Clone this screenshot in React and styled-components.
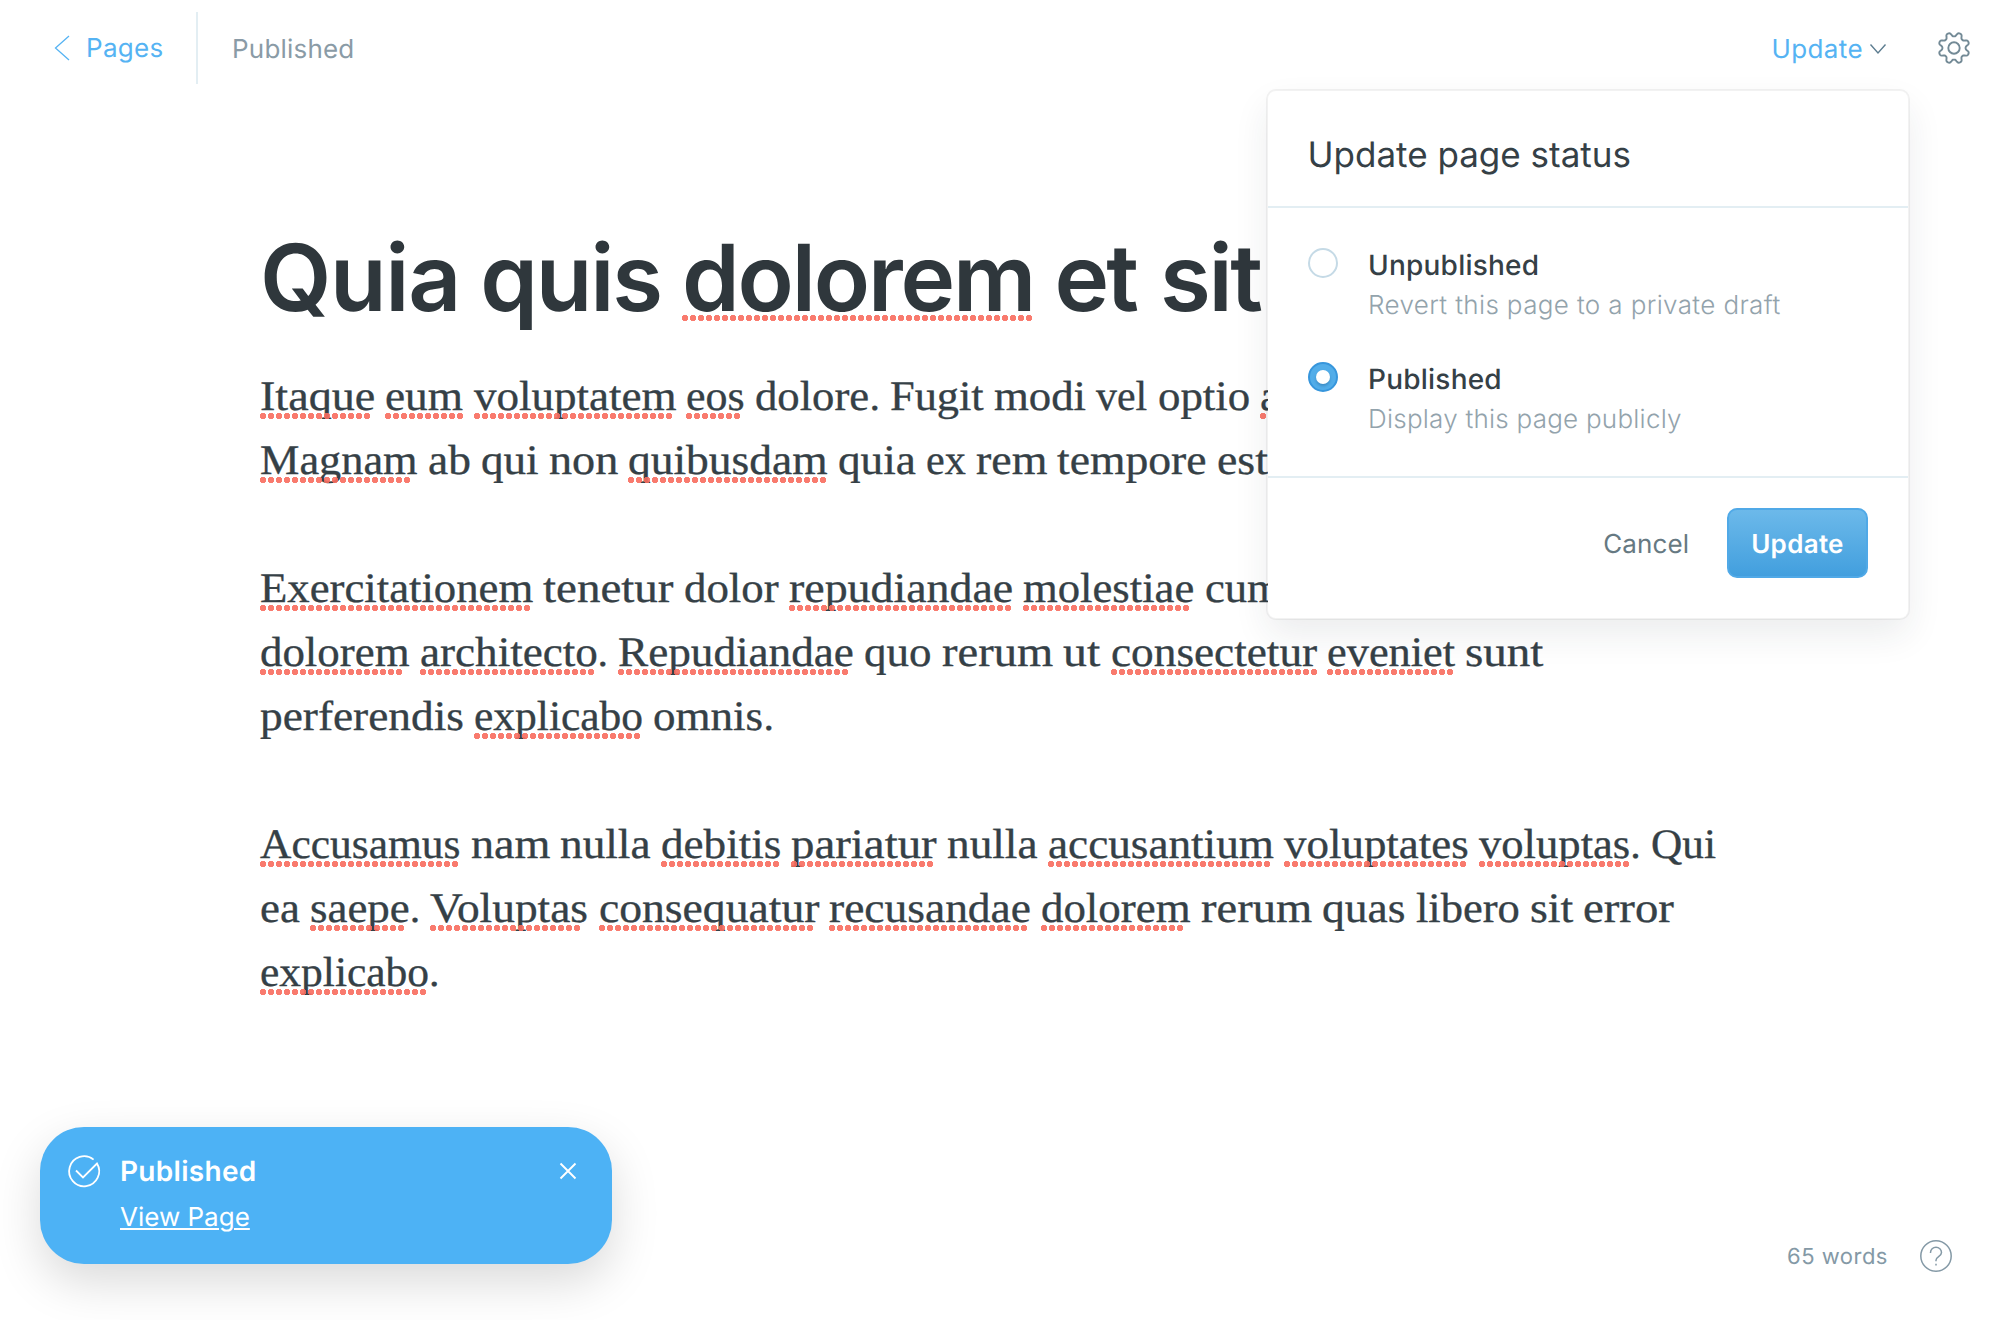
import React from "react";
import styled, { createGlobalStyle, css } from "styled-components";

const SERIF = '"Liberation Serif", Georgia, serif';
const SANS = 'Inter, "Open Sans", sans-serif';

const GlobalStyle = createGlobalStyle`
  * { box-sizing: border-box; }
  body { margin: 0; background: #fff; font-family: ${SANS}; text-rendering: geometricPrecision; }
  button { text-rendering: inherit; }
`;

/* Advance widths (1/1000 em) that the body copy is set to. */
const ADVANCES = {
  a: 504, b: 560, c: 454, d: 575, e: 484, f: 325, g: 510, h: 582, i: 293, j: 291, k: 535,
  l: 287, m: 880, n: 591, o: 539, p: 571, q: 560, r: 410, s: 432, t: 346, u: 576, v: 497,
  w: 738, x: 504, y: 493, z: 443, A: 671, E: 654, F: 600, I: 390, M: 928, R: 702,
  Q: 744, V: 667,
};
const BODY_EM = 40;
const BODY_TRACKING = 0.14;
const BODY_SIZE = 42;

const context = document.createElement("canvas").getContext("2d");

function fitWord(word) {
  context.font = '1000px "Liberation Serif"';
  const natural = (context.measureText(word).width * BODY_SIZE) / 1000;
  const width = [...word].reduce((sum, ch) => sum + (ADVANCES[ch] / 1000) * BODY_EM + BODY_TRACKING, 0);
  return { width, stretch: width / natural };
}

const Page = styled.div`
  position: relative;
  width: 2000px;
  height: 1320px;
  overflow: hidden;
  display: flex;
  flex-direction: column;
  background: #fff;
`;

const TopBar = styled.header`
  height: 96px;
  flex: none;
  display: flex;
  align-items: center;
  padding: 0 30px 0 54px;
`;

const BackLink = styled.a`
  display: flex;
  align-items: center;
  gap: 16px;
  width: 142px;
  height: 96px;
  color: #55b3f3;
  font-size: 26px;
  line-height: 40px;
  letter-spacing: 0.3px;
`;

const BackLabel = styled.span`
  padding-top: 2px;
`;

const Divider = styled.div`
  width: 2px;
  height: 72px;
  background: #e3eef3;
`;

const Status = styled.span`
  margin-left: 34px;
  padding-top: 4px;
  color: #8a9ba6;
  font-size: 26px;
  line-height: 40px;
  letter-spacing: 0.2px;
`;

const UpdateTrigger = styled.button`
  display: flex;
  align-items: center;
  gap: 7px;
  margin-left: auto;
  padding: 2px 0 0;
  border: 0;
  background: none;
  color: #55b3f3;
  font: 400 26px/40px ${SANS};
  letter-spacing: 0.4px;
`;

const UpdateLabel = styled.span`
  padding-top: 2px;
`;

const Icon = styled.svg`
  display: block;
  flex: none;
  overflow: visible;
  fill: none;
  stroke: currentColor;
  color: ${(p) => p.$color || "inherit"};
  margin-left: ${(p) => p.$gap || 0}px;
`;

const Editor = styled.main`
  flex: 1;
  padding: 127px 250px 0 260px;
`;

const dotted = css`
  &::after {
    content: "";
    position: absolute;
    left: 0;
    top: ${(p) => p.$dotTop}px;
    width: ${(p) => p.$dots * 8}px;
    height: 6px;
    background: radial-gradient(circle at 3px 3px, rgba(248, 108, 94, 0.9) 2.9px, transparent 3.4px) 0 0 / 8px 6px repeat-x;
  }
`;

const Title = styled.h1`
  display: flex;
  margin: 0 0 32px;
  color: #2f373c;
  font: 600 92.5px/110px ${SANS};
  white-space: pre;
`;

const TitleWord = styled.span`
  position: relative;
  flex: none;
  width: ${(p) => p.$width}px;
  letter-spacing: ${(p) => p.$tracking}px;
  ${(p) => p.$dots && dotted}
`;

const Paragraph = styled.p`
  margin: 0 0 64px;
  color: #354046;
  font: 400 ${BODY_SIZE}px/64px ${SERIF};
  word-spacing: -0.3px;
  -webkit-text-stroke: 0.35px #354046;
  white-space: nowrap;
`;

const Word = styled.span`
  position: relative;
  display: inline-block;
  width: ${(p) => p.$width}px;
  ${(p) => p.$dots && dotted}
`;

const Letters = styled.span`
  display: inline-block;
  transform: scaleX(${(p) => p.$stretch});
  transform-origin: 0 0;
`;

function Copy({ text }) {
  return text.split("\n").map((line, row) => (
    <React.Fragment key={row}>
      {row > 0 && <br />}
      {line.split(" ").map((token, i) => {
        const flagged = token.startsWith("*");
        const stop = token.endsWith(".");
        const word = token.replace(/[*.]/g, "");
        const { width, stretch } = fitWord(word);
        return (
          <React.Fragment key={i}>
            {i > 0 && " "}
            <Word $width={width.toFixed(2)} $dots={flagged ? Math.floor((width + 2) / 8) : 0} $dotTop={48}>
              <Letters $stretch={stretch.toFixed(4)}>{word}</Letters>
            </Word>
            {stop && "."}
          </React.Fragment>
        );
      })}
    </React.Fragment>
  ));
}

const Popover = styled.section`
  position: absolute;
  left: 1266px;
  top: 89px;
  width: 644px;
  border: 2px solid rgba(0, 0, 0, 0.05);
  border-radius: 10px;
  background: #fff;
  background-clip: padding-box;
  box-shadow: 0 16px 36px -2px rgba(30, 45, 55, 0.09);
`;

const PopoverHead = styled.h2`
  margin: 0;
  height: 117px;
  padding: 44px 39.5px 0;
  border-bottom: 2px solid #e3eef3;
  color: #354046;
  font: 400 35px/40px ${SANS};
`;

const Options = styled.div`
  display: flex;
  flex-direction: column;
  gap: 33px;
  padding: 37px 40px 36px;
  border-bottom: 2px solid #e3eef3;
`;

const Option = styled.label`
  display: flex;
  gap: 30px;
`;

const Radio = styled.span`
  flex: none;
  width: 30px;
  height: 30px;
  margin-top: 3px;
  border-radius: 50%;
  border: 2px solid ${(p) => (p.$on ? "#3796dc" : "#c5dae6")};
  background: ${(p) => (p.$on ? "#52ade9" : "#fff")};
  display: flex;
  align-items: center;
  justify-content: center;
  &::after {
    content: "";
    display: ${(p) => (p.$on ? "block" : "none")};
    width: 14px;
    height: 14px;
    border-radius: 50%;
    background: #fff;
    box-shadow: 0 2px 3px rgba(20, 80, 130, 0.35);
  }
`;

const OptionText = styled.span`
  display: flex;
  flex-direction: column;
  gap: 1px;
  line-height: 40px;
`;

const OptionName = styled.span`
  color: #354046;
  font-size: 28px;
  font-weight: 500;
  letter-spacing: 0.22px;
`;

const OptionHint = styled.span`
  color: #93a3ac;
  font-size: 26px;
  font-weight: 300;
  letter-spacing: ${(p) => p.$tracking}px;
`;

const Actions = styled.div`
  display: flex;
  justify-content: flex-end;
  align-items: center;
  gap: 38px;
  padding: 30px 40px 40px;
`;

const Cancel = styled.button`
  border: 0;
  padding: 3px 0 0;
  background: none;
  color: #667982;
  font: 400 26px/40px ${SANS};
  letter-spacing: 0.07px;
`;

const Confirm = styled.button`
  width: 141px;
  height: 70px;
  padding: 3px 0 0;
  border: 2px solid #50a9e7;
  border-radius: 10px;
  background: linear-gradient(#6cb9ea, #429fde);
  color: #fff;
  font: 600 26px/40px ${SANS};
  letter-spacing: 0.3px;
`;

const Toast = styled.aside`
  position: absolute;
  left: 40px;
  top: 1127px;
  width: 572px;
  height: 137px;
  display: flex;
  align-items: flex-start;
  padding: 24px 36px 0 28px;
  border-radius: 44px;
  background: #4db2f5;
  color: #fff;
  box-shadow: 0 18px 48px rgba(0, 0, 0, 0.15);
`;

const ToastText = styled.div`
  flex: 1;
  display: flex;
  flex-direction: column;
  align-items: flex-start;
  gap: 7px;
  margin-left: 20px;
  line-height: 40px;
`;

const ToastTitle = styled.strong`
  font-size: 28px;
  font-weight: 600;
  letter-spacing: 0.3px;
`;

const ToastLink = styled.a`
  font-size: 26px;
  text-decoration: underline;
  text-decoration-thickness: 2px;
  text-underline-offset: 2px;
`;

const ToastIcon = styled(Icon)`
  margin-top: ${(p) => p.$top}px;
`;

const Footer = styled.footer`
  position: absolute;
  right: 48px;
  bottom: 48px;
  display: flex;
  align-items: center;
  gap: 32px;
  color: #8499a6;
`;

const WordCount = styled.span`
  padding-top: 2px;
  font-size: 22px;
  line-height: 26px;
  letter-spacing: 0.5px;
`;

function gearPath() {
  const pts = [];
  for (let i = 0; i < 160; i += 1) {
    const a = (i / 160) * Math.PI * 2;
    const wave = Math.tanh(1.5 * Math.cos(8 * (a - Math.PI / 8))) / Math.tanh(1.5);
    const r = 13.6 + 2 * wave;
    pts.push(`${(16 + r * Math.cos(a)).toFixed(2)} ${(16 + r * Math.sin(a)).toFixed(2)}`);
  }
  return `M${pts.join("L")}Z`;
}
const GEAR = gearPath();

const PARAGRAPHS = [
  "*Itaque *eum *voluptatem *eos dolore. Fugit modi vel optio *aliquam\n*Magnam ab qui non *quibusdam quia ex rem tempore est",
  "*Exercitationem tenetur dolor *repudiandae *molestiae cum\n*dolorem *architecto. *Repudiandae quo rerum ut *consectetur *eveniet sunt\nperferendis *explicabo omnis.",
  "*Accusamus nam nulla *debitis *pariatur nulla *accusantium *voluptates *voluptas. Qui\nea *saepe. *Voluptas *consequatur *recusandae *dolorem rerum quas libero sit error\n*explicabo.",
];

export default function App() {
  return (
    <Page>
      <GlobalStyle />
      <TopBar>
        <BackLink>
          <Icon width="16" height="26" viewBox="0 0 16 26" strokeWidth="1.3">
            <path d="M15 1 1.5 13 15 25" />
          </Icon>
          <BackLabel>Pages</BackLabel>
        </BackLink>
        <Divider />
        <Status>Published</Status>
        <UpdateTrigger>
          <UpdateLabel>Update</UpdateLabel>
          <Icon width="16" height="10" viewBox="0 0 16 10" strokeWidth="1.4" $color="#5d7d90">
            <path d="M.5.5 8 9 15.5.5" />
          </Icon>
        </UpdateTrigger>
        <Icon width="32" height="32" viewBox="0 0 32 32" strokeWidth="1.9" $color="#738a96" $gap={52}>
          <path d={GEAR} strokeLinejoin="round" />
          <circle cx="16" cy="16" r="5.7" />
        </Icon>
      </TopBar>

      <Editor>
        <Title>
          <TitleWord $width={220.3} $tracking={-1.4}>{"Quia "}</TitleWord>
          <TitleWord $width={201.7} $tracking={-2.2}>{"quis "}</TitleWord>
          <TitleWord $width={372.5} $tracking={-2.17} $dots={44} $dotTop={92}>{"dolorem "}</TitleWord>
          <TitleWord $width={105.5} $tracking={-3}>{"et "}</TitleWord>
          <TitleWord $width={110} $tracking={-2.4}>sit</TitleWord>
        </Title>
        {PARAGRAPHS.map((text) => (
          <Paragraph key={text}>
            <Copy text={text} />
          </Paragraph>
        ))}
      </Editor>

      <Popover>
        <PopoverHead>Update page status</PopoverHead>
        <Options>
          <Option>
            <Radio />
            <OptionText>
              <OptionName>Unpublished</OptionName>
              <OptionHint $tracking={0.37}>Revert this page to a private draft</OptionHint>
            </OptionText>
          </Option>
          <Option>
            <Radio $on />
            <OptionText>
              <OptionName>Published</OptionName>
              <OptionHint $tracking={0.24}>Display this page publicly</OptionHint>
            </OptionText>
          </Option>
        </Options>
        <Actions>
          <Cancel>Cancel</Cancel>
          <Confirm>Update</Confirm>
        </Actions>
      </Popover>

      <Toast>
        <ToastIcon width="32" height="32" viewBox="0 0 32 32" strokeWidth="1.8" $top={4}>
          <path d="M25.6 4.6A15 15 0 1 0 29 8.5L15 22.5 8 15.5" />
        </ToastIcon>
        <ToastText>
          <ToastTitle>Published</ToastTitle>
          <ToastLink>View Page</ToastLink>
        </ToastText>
        <ToastIcon width="16" height="16" viewBox="0 0 16 16" strokeWidth="1.9" $top={12}>
          <path d="M.5.5l15 15M15.5.5l-15 15" />
        </ToastIcon>
      </Toast>

      <Footer>
        <WordCount>65 words</WordCount>
        <Icon width="32" height="32" viewBox="0 0 32 32" strokeWidth="1.5">
          <circle cx="16" cy="16" r="15.2" />
          <path d="M10.5 13V12.5a5.5 5.2 0 0 1 11 0c0 4.2-5.5 4.2-5.5 7.8v1" />
          <path d="M16 23.7v1.8" />
        </Icon>
      </Footer>
    </Page>
  );
}
